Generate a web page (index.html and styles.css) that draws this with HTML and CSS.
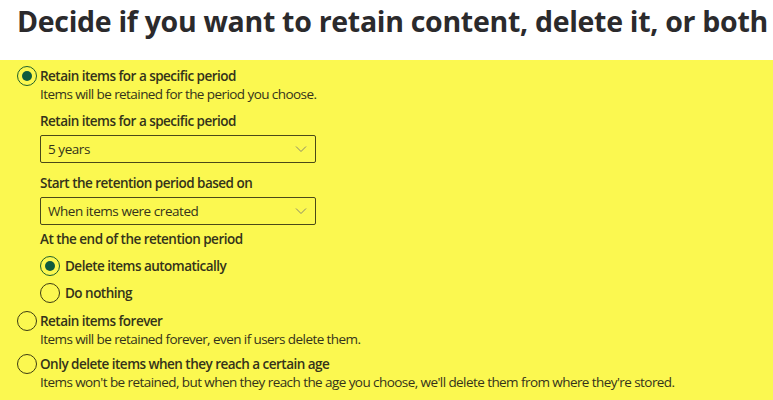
FILE: index.html
```html
<!DOCTYPE html>
<html>
<head>
  <title>Retention settings</title>
  <link rel="stylesheet" href="styles.css">
</head>
<body>
  <h1 class="title">Decide if you want to retain content, delete it, or both</h1>

  <div class="panel">
    <div class="option">
      <span class="radio checked"></span>
      <div class="option-body">
        <div class="option-label">Retain items for a specific period</div>
        <div class="option-desc">Items will be retained for the period you choose.</div>

        <div class="field">
          <div class="field-label">Retain items for a specific period</div>
          <div class="dropdown">
            <span>5 years</span>
            <svg class="chevron" width="12" height="8" viewBox="0 0 12 8"><path d="M1 1.5L6 6.5L11 1.5" fill="none" stroke="#8a8a6a" stroke-width="1"/></svg>
          </div>
        </div>

        <div class="field">
          <div class="field-label">Start the retention period based on</div>
          <div class="dropdown">
            <span>When items were created</span>
            <svg class="chevron" width="12" height="8" viewBox="0 0 12 8"><path d="M1 1.5L6 6.5L11 1.5" fill="none" stroke="#8a8a6a" stroke-width="1"/></svg>
          </div>
        </div>

        <div class="field end">
          <div class="field-label">At the end of the retention period</div>
          <div class="sub-options">
            <div class="option">
              <span class="radio checked"></span>
              <div class="option-label">Delete items automatically</div>
            </div>
            <div class="option">
              <span class="radio"></span>
              <div class="option-label">Do nothing</div>
            </div>
          </div>
        </div>
      </div>
    </div>

    <div class="option forever">
      <span class="radio"></span>
      <div class="option-body">
        <div class="option-label">Retain items forever</div>
        <div class="option-desc">Items will be retained forever, even if users delete them.</div>
      </div>
    </div>

    <div class="option">
      <span class="radio"></span>
      <div class="option-body">
        <div class="option-label">Only delete items when they reach a certain age</div>
        <div class="option-desc">Items won't be retained, but when they reach the age you choose, we'll delete them from where they're stored.</div>
      </div>
    </div>
  </div>
</body>
</html>
```

FILE: styles.css
```css
body {
  margin: 0;
  font-family: "Open Sans", "Noto Sans", sans-serif;
  color: #34331a;
  background: #fff;
}
.title {
  box-sizing: border-box;
  margin: 0;
  padding: 2px 0 0 17px;
  height: 60px;
  font-size: 28.5px;
  line-height: 38px;
  font-weight: 700;
  color: #2b2a2c;
  letter-spacing: -0.3px;
  white-space: nowrap;
}
.panel {
  background: #fbf850;
  padding: 6px 0 16px 17px;
  display: flex;
  flex-direction: column;
  gap: 6px;
}
.option {
  display: flex;
  gap: 3px;
  align-items: flex-start;
}
.option.forever {
  margin-top: 2px;
}
.option-body {
  padding-top: 1px;
}
.radio {
  flex: none;
  width: 18px;
  height: 18px;
  border: 1px solid #3d3c12;
  border-radius: 50%;
  display: flex;
  align-items: center;
  justify-content: center;
}
.radio.checked {
  border-color: #1f5f2a;
}
.radio.checked::after {
  content: "";
  width: 10px;
  height: 10px;
  border-radius: 50%;
  background: #0e5c3e;
}
.option-label,
.field-label {
  font-size: 13.5px;
  font-weight: 600;
  line-height: 18px;
  letter-spacing: -0.52px;
}
.option-desc {
  font-size: 13.5px;
  line-height: 18px;
  letter-spacing: -0.57px;
}
.field {
  margin-top: 9px;
}
.field + .field {
  margin-top: 11px;
}
.field.end {
  margin-top: 5px;
}
.field-label {
  margin-bottom: 5px;
}
.dropdown {
  box-sizing: border-box;
  width: 276px;
  height: 28px;
  border: 1px solid #4a4918;
  border-radius: 2px;
  padding: 0 8px 0 7px;
  display: flex;
  align-items: center;
  justify-content: space-between;
  font-size: 13.5px;
  letter-spacing: -0.45px;
}
.sub-options {
  display: flex;
  flex-direction: column;
  gap: 7px;
  margin-top: 8px;
}
.sub-options .option {
  gap: 5px;
}
.sub-options .option-label {
  padding-top: 1px;
}
```
